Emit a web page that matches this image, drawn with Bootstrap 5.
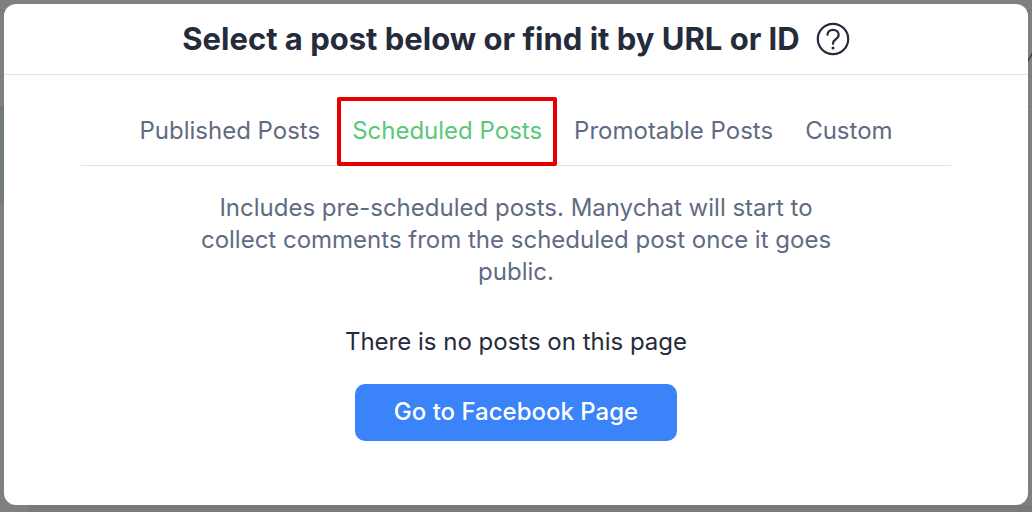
<!DOCTYPE html>
<html lang="en">
<head>
<meta charset="utf-8">
<meta name="viewport" content="width=device-width, initial-scale=1">
<title>Select a post</title>
<link href="https://cdn.jsdelivr.net/npm/bootstrap@5.3.0/dist/css/bootstrap.min.css" rel="stylesheet">
<style>
/* dimmed page behind the dialog: header rules, side menu highlight, footer band and a stroke of a top-right icon */
body{
background:
linear-gradient(#747474,#747474) 0 10px/100% 1px no-repeat,
linear-gradient(#747474,#747474) 0 106px/100% 1px no-repeat,
linear-gradient(#727c74,#727c74) 0 107px/4px 96px no-repeat,
linear-gradient(120deg,transparent 38%,#3c3f4c 42%,#3c3f4c 58%,transparent 62%) 100% 53px/4px 9px no-repeat,
linear-gradient(#77797b,#77797b) 28px 100%/100% 7px no-repeat,
#808080;
font-family:Inter,sans-serif;font-size:24px;line-height:32px;color:#252b3a}
.post-dialog{min-height:calc(100vh - 7px - 4px);border-radius:12px;background:#fff}
.page-frame{padding:4px 4px 7px}
.dialog-head{height:71px;border-bottom:1px solid #e1e3e6}
.dialog-title{font-size:31px;line-height:40px;font-weight:700}
.help-btn{width:34px;height:34px;color:#252b3a}
.post-tabs{gap:2px;margin:22px 77px 0;border-bottom:1px solid #e0e2e9}
.post-tabs .nav-link{margin-bottom:-1px;padding:14px 11px 15px;border:4px solid transparent;border-radius:2px;color:#5f6b82;line-height:32px}
.post-tabs .nav-link.active{color:#5ac878;border-color:#e60000}
.post-body{padding-top:26px}
.hint{max-width:640px;margin-bottom:38px;color:#5f6b82}
.empty-note{margin-bottom:26px}
.fb-btn,.fb-btn:hover{width:322px;height:57px;padding:0 12px 2px;border-radius:10px;background:#3a83f9;color:#fff;font-size:24px;line-height:32px;font-weight:500}
</style>
</head>
<body>
<div class="page-frame">
<main class="post-dialog d-flex flex-column" role="dialog" aria-labelledby="title">
<header class="dialog-head d-flex align-items-center justify-content-center gap-3">
<h1 class="dialog-title m-0" id="title">Select a post below or find it by URL or ID</h1>
<button class="help-btn btn border-0 p-0 d-flex" type="button" aria-label="Help">
<svg width="34" height="34" viewBox="0 0 34 34" fill="none" stroke="currentColor" stroke-width="2.2" stroke-linecap="round"><circle cx="17" cy="17" r="15.2"/><path d="M11.500 12.800C11.500 9.500 14 7.800 17 7.800s5.700 1.900 5.700 5c0 2.400-1.500 3.500-3.200 4.700C17.800 18.700 17 19.500 17 21.800"/><circle cx="17" cy="26" r="1.500" fill="currentColor" stroke="none"/></svg>
</button>
</header>
<nav class="post-tabs nav justify-content-center">
<a class="nav-link" href="#">Published Posts</a>
<a class="nav-link active" href="#" aria-current="page">Scheduled Posts</a>
<a class="nav-link" href="#">Promotable Posts</a>
<a class="nav-link" href="#">Custom</a>
</nav>
<section class="post-body d-flex flex-column align-items-center text-center">
<p class="hint">Includes pre-scheduled posts. Manychat will start to collect comments from the scheduled post once it goes public.</p>
<p class="empty-note">There is no posts on this page</p>
<button class="fb-btn btn border-0" type="button">Go to Facebook Page</button>
</section>
</main>
</div>
<script src="https://cdn.jsdelivr.net/npm/bootstrap@5.3.0/dist/js/bootstrap.bundle.min.js"></script>
</body>
</html>
